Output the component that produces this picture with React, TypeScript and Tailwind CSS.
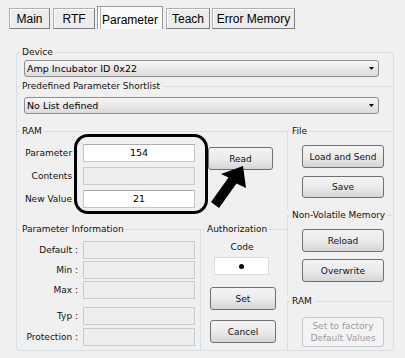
import type { ReactNode } from "react";

const tabs = [
  { name: "Main", w: "w-[41px]", ml: "ml-[9px]" },
  { name: "RTF", w: "w-[42px]", ml: "ml-[3px]" },
  { name: "Parameter", w: "w-[66px]", ml: "ml-[2px]", active: true },
  { name: "Teach", w: "w-[44px]", ml: "ml-[3px]" },
  { name: "Error Memory", w: "w-[83px]", ml: "ml-[2px]" },
];

const Select = ({ value, className = "" }: { value: string; className?: string }) => (
  <div
    className={`flex h-[17px] w-[355px] items-center justify-between rounded-[3px] border border-[#8e8e8e] bg-linear-to-b from-[#f7f7f7] to-[#dcdcdc] pl-[2px] pr-[4px] text-[9.5px] leading-none text-black ${className}`}
  >
    <span>{value}</span>
    <svg width="5" height="3" viewBox="0 0 5 3">
      <polygon points="0,0 5,0 2.5,3" fill="#000" />
    </svg>
  </div>
);

const Button = ({
  children,
  className = "",
  disabled,
}: {
  children: ReactNode;
  className?: string;
  disabled?: boolean;
}) => (
  <div
    className={`flex items-center justify-center rounded-[3px] border text-center text-[9px] leading-[12px] ${
      disabled
        ? "border-[#c8c8c8] bg-[#f3f3f3] text-[#9c9c9c]"
        : "border-[#707070] bg-linear-to-b from-[#f4f4f4] via-[#ebebeb] to-[#d5d5d5] text-[#111]"
    } ${className}`}
  >
    {children}
  </div>
);

const Legend = ({ children, ml = "ml-[3px]" }: { children: ReactNode; ml?: string }) => (
  <legend className={`${ml} px-[2px] text-[9px] leading-[12px] text-[#111]`}>{children}</legend>
);

const Field = ({
  label,
  value,
  disabled,
  h = "h-[18px]",
  mt = "",
}: {
  label: string;
  value?: string;
  disabled?: boolean;
  h?: string;
  mt?: string;
}) => (
  <div className={`flex items-center ${mt}`}>
    <div className="w-[61px] whitespace-nowrap text-right text-[9px] leading-[12px] text-[#111]">{label}</div>
    <div
      className={`ml-[5px] flex ${h} w-[112px] items-center justify-center border text-[9.5px] ${
        disabled ? "border-[#cbcbcb] bg-[#ededed]" : "border-[#c4c4c4] border-t-[#adadad] bg-white"
      }`}
    >
      {value}
    </div>
  </div>
);

export default function App() {
  return (
    <div className="relative h-[358px] w-[405px] overflow-hidden bg-[#f0f0f0] font-['DejaVu_Sans',Verdana,sans-serif]">
      {/* tabs */}
      <div className="flex h-[29px] items-end font-['Liberation_Sans',Arial,sans-serif]">
        {tabs.map((t) => (
          <div
            key={t.name}
            className={`${t.ml} ${t.w} flex items-center justify-center border text-[12px] text-black ${
              t.active
                ? "h-[23px] border-[#9a9a9a] border-b-0 bg-[#fafafa] pt-[3px] shadow-[inset_2px_0_0_#fff,inset_3px_0_0_#b0b0b0]"
                : "h-[21px] border-[#b0b0b0] border-r-[#7d7d7d] border-b-[#7d7d7d] bg-[#ececec] shadow-[inset_1px_1px_0_#fff]"
            }`}
          >
            {t.name}
          </div>
        ))}
      </div>

      {/* main group */}
      <fieldset className="ml-[16px] mt-[17px] w-[378px] rounded-[4px] border border-[#d6dfe5]">
        <Legend>Device</Legend>
        <Select value="Amp Incubator ID 0x22" className="ml-[7px] mt-[2px]" />

        <fieldset className="mt-[3px] border-t border-[#d6dfe5] pb-[11px]">
          <Legend>Predefined Parameter Shortlist</Legend>
          <Select value="No List defined" className="ml-[7px] mt-[5px]" />
        </fieldset>

        <div className="flex h-[225px]">
          {/* left column */}
          <div className="flex w-[270px] flex-col">
            <fieldset className="h-[98px] border-t border-[#d6dfe5]">
              <Legend>RAM</Legend>
              <div className="flex pt-[7px]">
                <div className="flex flex-col gap-[5px]">
                  <Field label="Parameter :" value="154" />
                  <Field label="Contents :" disabled />
                  <Field label="New Value :" value="21" />
                </div>
                <Button className="ml-[13px] mt-[3px] h-[23px] w-[65px]">Read</Button>
              </div>
            </fieldset>

            <div className="flex flex-1">
              <fieldset className="w-[183px] border-t border-[#d6dfe5]">
                <Legend>Parameter Information</Legend>
                <div className="pt-[6px]">
                  <Field label="Default :" disabled />
                  <Field label="Min :" disabled mt="mt-[2px]" />
                  <Field label="Max :" disabled mt="mt-[2px]" />
                  <Field label="Typ :" disabled mt="mt-[8px]" />
                  <Field label="Protection :" disabled mt="mt-[3px]" />
                </div>
              </fieldset>
              <fieldset className="w-[87px] border-t border-l border-[#d6dfe5]">
                <Legend ml="ml-[4px]">Authorization</Legend>
                <div className="flex flex-col pt-[6px]">
                  <div className="pr-[4px] text-center text-[9px] leading-[12px] text-[#111]">Code</div>
                  <div className="ml-[13px] mt-[4px] flex h-[18px] w-[55px] items-center justify-center border border-[#dcdcdc] bg-white">
                    <div className="h-[5px] w-[5px] rounded-full bg-black" />
                  </div>
                  <Button className="ml-[9px] mt-[12px] h-[23px] w-[66px]">Set</Button>
                  <Button className="ml-[9px] mt-[10px] h-[23px] w-[66px]">Cancel</Button>
                </div>
              </fieldset>
            </div>
          </div>

          {/* right column */}
          <div className="flex flex-1 flex-col">
            <fieldset className="h-[84px] border-t border-l border-[#d6dfe5]">
              <Legend ml="ml-[2px]">File</Legend>
              <Button className="ml-[14px] mt-[8px] h-[23px] w-[82px]">Load and Send</Button>
              <Button className="ml-[14px] mt-[8px] h-[22px] w-[82px]">Save</Button>
            </fieldset>
            <fieldset className="h-[86px] border-t border-l border-[#d6dfe5]">
              <Legend ml="ml-[2px]">Non-Volatile Memory</Legend>
              <Button className="ml-[14px] mt-[8px] h-[23px] w-[82px]">Reload</Button>
              <Button className="ml-[14px] mt-[7px] h-[23px] w-[82px]">Overwrite</Button>
            </fieldset>
            <fieldset className="flex-1 border-t border-l border-[#d6dfe5]">
              <Legend ml="ml-[2px]">RAM</Legend>
              <Button disabled className="ml-[14px] mt-[10px] h-[30px] w-[82px]">
                Set to factory
                <br />
                Default Values
              </Button>
            </fieldset>
          </div>
        </div>
      </fieldset>

      {/* annotation overlay */}
      <div className="absolute left-[74px] top-[134px] h-[80px] w-[134px] rounded-[14px] border-[3px] border-black" />
      <svg className="absolute left-0 top-0" width="405" height="358" viewBox="0 0 405 358">
        <polygon
          points="243,166 246,188 236.5,183.5 219,208 211,202 228.5,177.5 221,174"
          fill="#000"
        />
      </svg>
    </div>
  );
}
